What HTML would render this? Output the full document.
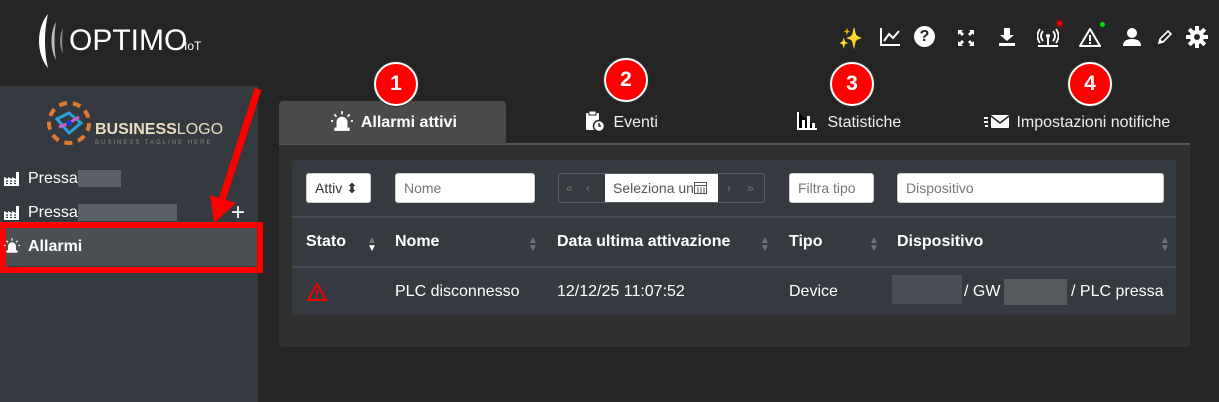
<!DOCTYPE html>
<html><head><meta charset="utf-8"><style>
*{box-sizing:border-box;margin:0;padding:0}
body{width:1219px;height:402px;background:#252525;font-family:"Liberation Sans",sans-serif;color:#fff;position:relative;overflow:hidden}
.abs{position:absolute}
.side{left:0;top:86px;width:258px;height:316px;background:#353a40}
.nav{font-size:16px;color:#fff}
.blur{display:inline-block;background:#5b5f66;height:17px;vertical-align:middle}
.circ{width:44px;height:44px;border-radius:50%;background:#f00;border:2px solid #fff;box-shadow:0 0 0 1px #333;font-weight:bold;font-size:21px;text-align:center;line-height:40px}
.tab{top:101px;height:43px;font-size:16px;line-height:43px;color:#eee}
.inp{background:#fff;border-radius:3px;border:1px solid #ccc;height:30px;top:173px;color:#777;font-size:14px;line-height:28px;padding-left:8px}
.th{top:233px;font-weight:bold;font-size:16px}
.td{top:283px;font-size:16px}
.sort{color:#6c737a;font-size:10px;line-height:8px}
svg.i{vertical-align:middle}
</style></head><body>
<svg width="0" height="0" style="position:absolute"><defs>
<symbol id="siren" viewBox="0 0 20 18"><path d="M5 16V10A5 5 0 0 1 15 10V16Z" fill="#fff"/><rect x="3" y="15" width="14" height="3" fill="#fff"/><path d="M10 0V3M3 3L5 5M17 3L15 5M0 9H2M18 9H20" stroke="#fff" stroke-width="1.6"/></symbol>
<symbol id="fact" viewBox="0 0 16 14"><path d="M0 14V5L4 7V5L8 7V5L12 7V0H15V14Z" fill="#fff"/><path d="M2 9H4M6 9H8M10 9H12M2 11.5H4M6 11.5H8M10 11.5H12" stroke="#353a40" stroke-width="1.3"/></symbol>
</defs></svg>
<!-- logo -->
<svg class="abs" style="left:38px;top:12px" width="30" height="58" viewBox="0 0 30 58"><path d="M10 2 C-2 16 -2 42 10 56 C6 40 6 18 10 2Z" fill="#fff"/><path d="M18 10 C12 20 12 38 18 48 C16 36 16 22 18 10Z" fill="#bbb"/><path d="M25 16 C21 24 21 34 25 42 C24 34 24 24 25 16Z" fill="#888"/></svg>
<div class="abs" style="left:69px;top:24px;font-size:30px;letter-spacing:0px">OPTIMO</div>
<div class="abs" style="left:184px;top:39px;font-size:12px">IoT</div>
<!-- top icons -->
<div class="abs" style="left:838px;top:26px;font-size:20px;color:#f5c542">✨</div>
<svg class="abs" style="left:880px;top:28px" width="20" height="18"><path d="M1 0V17H20" stroke="#fff" stroke-width="2" fill="none"/><path d="M4 13L9 6L13 10L19 3" stroke="#fff" stroke-width="2" fill="none"/></svg>
<div class="abs" style="left:914px;top:26px;width:21px;height:21px;border-radius:50%;background:#fff;color:#252525;font-weight:bold;font-size:16px;text-align:center;line-height:21px">?</div>
<svg class="abs" style="left:957px;top:29px" width="18" height="18" viewBox="0 0 18 18"><path d="M1 1H6L4.5 2.5L7 5L5 7L2.5 4.5L1 6ZM17 1V6L15.5 4.5L13 7L11 5L13.5 2.5L12 1ZM1 17V12L2.5 13.5L5 11L7 13L4.5 15.5L6 17ZM17 17H12L13.5 15.5L11 13L13 11L15.5 13.5L17 12Z" fill="#fff"/></svg>
<svg class="abs" style="left:998px;top:28px" width="18" height="18"><path d="M6 0H12V7H16L9 13L2 7H6Z" fill="#fff"/><rect x="1" y="15" width="16" height="3" fill="#fff"/></svg>
<svg class="abs" style="left:1037px;top:28px" width="22" height="20"><circle cx="11" cy="8" r="2" fill="#fff"/><path d="M6 3Q2 8 6 13M16 3Q20 8 16 13M3 1Q-2 8 3 15M19 1Q24 8 19 15" stroke="#fff" stroke-width="1.8" fill="none"/><path d="M11 10V18M1 18H21" stroke="#fff" stroke-width="2"/></svg>
<div class="abs" style="left:1057px;top:21px;width:5px;height:5px;border-radius:50%;background:#f00;box-shadow:0 0 5px #f00"></div>
<svg class="abs" style="left:1079px;top:28px" width="22" height="19"><path d="M11 1L21 18H1Z" stroke="#fff" stroke-width="2" fill="none" stroke-linejoin="round"/><rect x="10" y="7" width="2" height="6" fill="#fff"/><rect x="10" y="14" width="2" height="2" fill="#fff"/></svg>
<div class="abs" style="left:1100px;top:22px;width:5px;height:5px;border-radius:50%;background:#0d0"></div>
<svg class="abs" style="left:1123px;top:28px" width="18" height="18"><circle cx="9" cy="5" r="5" fill="#fff"/><path d="M0 18Q0 11 9 11Q18 11 18 18Z" fill="#fff"/></svg>
<svg class="abs" style="left:1157px;top:29px" width="16" height="16"><path d="M2 14L3 10L11 2L14 5L6 13Z" stroke="#fff" stroke-width="1.6" fill="none"/><path d="M1 15L3 10L6 13Z" fill="#fff"/></svg>
<svg class="abs" style="left:1186px;top:26px" width="22" height="22" viewBox="0 0 22 22"><g fill="#fff"><circle cx="11" cy="11" r="7"/><rect x="9" y="0" width="4" height="22"/><rect x="0" y="9" width="22" height="4"/><rect x="9" y="0" width="4" height="22" transform="rotate(45 11 11)"/><rect x="9" y="0" width="4" height="22" transform="rotate(-45 11 11)"/></g><circle cx="11" cy="11" r="3" fill="#252525"/></svg>
<!-- sidebar -->
<div class="abs side"></div>
<svg class="abs" style="left:45px;top:99px" width="48" height="48"><circle cx="24" cy="24" r="20" fill="none" stroke="#e07a30" stroke-width="4" stroke-dasharray="8 6"/><path d="M12 20L24 14L36 24L24 34Z" stroke="#2a9fd8" stroke-width="3" fill="none"/><path d="M14 28L24 24L34 18" stroke="#d65ac8" stroke-width="3" fill="none"/><circle cx="24" cy="24" r="3" fill="#1740c0"/></svg>
<div class="abs" style="left:95px;top:121px;font-size:16px;font-weight:bold;color:#e8dcc0">BUSINESS<span style="font-weight:normal">LOGO</span></div>
<div class="abs" style="left:95px;top:140px;font-size:6px;letter-spacing:2px;color:#888">BUSINESS TAGLINE HERE</div>
<svg class="abs" style="left:4px;top:172px" width="16" height="14"><use href="#fact"/></svg>
<div class="abs nav" style="top:170px;left:28px">Pressa<span class="blur" style="width:43px"></span></div>
<svg class="abs" style="left:4px;top:206px" width="16" height="14"><use href="#fact"/></svg>
<div class="abs nav" style="top:204px;left:28px">Pressa<span class="blur" style="width:99px"></span></div>
<div class="abs" style="left:231px;top:199px;font-size:24px">+</div>
<div class="abs" style="left:0;top:228px;width:258px;height:38px;background:#4a4f53"></div>
<div class="abs" style="left:0;top:222px;width:263px;height:51px;border:6px solid #f00"></div>
<svg class="abs" style="left:4px;top:238px" width="16" height="15"><use href="#siren"/></svg>
<div class="abs nav" style="top:238px;left:28px;font-weight:bold">Allarmi</div>
<svg class="abs" style="left:200px;top:85px" width="70" height="140"><path d="M58 4L22 115" stroke="#f00" stroke-width="7"/><path d="M10 110L36 118L14 138Z" fill="#f00"/></svg>
<!-- tabs -->
<div class="abs" style="left:279px;top:143px;width:911px;height:2px;background:#555"></div>
<div class="abs tab" style="left:279px;width:227px;background:#4a4a4a;border-radius:4px 4px 0 0;font-weight:bold;color:#fff;padding-left:52px"><svg class="i" width="22" height="20" style="margin-top:-3px;margin-right:4px"><use href="#siren"/></svg> Allarmi attivi</div>
<div class="abs tab" style="left:585px"><svg class="i" width="20" height="22" viewBox="0 0 20 22" style="margin-top:-3px;margin-right:4px"><rect x="1" y="3" width="13" height="17" rx="1" fill="#fff"/><rect x="4" y="1" width="7" height="4" fill="#fff" stroke="#252525"/><circle cx="14" cy="16" r="5.5" fill="#fff" stroke="#252525" stroke-width="1.5"/><path d="M14 13V16H16" stroke="#252525" stroke-width="1.4" fill="none"/></svg> Eventi</div>
<div class="abs tab" style="left:797px"><svg class="i" width="20" height="18" style="margin-top:-3px;margin-right:6px"><path d="M1 0V17H20" stroke="#fff" stroke-width="2"/><rect x="5" y="8" width="3" height="8" fill="#fff"/><rect x="10" y="4" width="3" height="12" fill="#fff"/><rect x="15" y="11" width="3" height="5" fill="#fff"/></svg> Statistiche</div>
<div class="abs tab" style="left:984px"><svg class="i" width="26" height="16" style="margin-top:-3px;margin-right:2px"><path d="M0 5H4M0 9H4M1 13H4" stroke="#fff" stroke-width="2"/><rect x="7" y="2" width="18" height="13" rx="1" fill="#fff"/><path d="M7 3L16 10L25 3" stroke="#252525" stroke-width="1.6" fill="none"/></svg> Impostazioni notifiche</div>
<div class="abs circ" style="left:374px;top:62px">1</div>
<div class="abs circ" style="left:604px;top:58px">2</div>
<div class="abs circ" style="left:830px;top:62px">3</div>
<div class="abs circ" style="left:1068px;top:62px">4</div>
<!-- panel -->
<div class="abs" style="left:279px;top:145px;width:911px;height:202px;background:#303030;border-radius:0 0 4px 4px"></div>
<div class="abs" style="left:292px;top:160px;width:884px;height:155px;background:#343a40;border-radius:3px"></div>
<div class="abs" style="left:292px;top:216px;width:884px;height:2px;background:#454c53"></div>
<div class="abs" style="left:292px;top:266px;width:884px;height:2px;background:#454c53"></div>
<div class="abs inp" style="left:306px;width:65px;color:#333">Attiv ⬍</div>
<div class="abs inp" style="left:395px;width:140px">Nome</div>
<div class="abs" style="left:558px;top:173px;width:207px;height:30px;border:1px solid #555d64;border-radius:3px;color:#777;font-size:12px;line-height:28px">
<span class="abs" style="left:7px">«</span><span class="abs" style="left:27px">‹</span><span class="abs" style="left:168px">›</span><span class="abs" style="left:188px">»</span>
<div class="abs" style="left:46px;top:0;width:113px;height:28px;background:#fff;color:#555;font-size:14px;padding-left:8px;overflow:hidden;white-space:nowrap">Seleziona un<svg class="i" width="13" height="13" style="margin-top:-3px"><rect x="0.5" y="1.5" width="12" height="11" fill="none" stroke="#555"/><path d="M0 4.5H13M4 6V12M7 6V12M10 6V12" stroke="#555"/></svg></div></div>
<div class="abs inp" style="left:789px;width:85px;overflow:hidden;white-space:nowrap">Filtra tipo</div>
<div class="abs inp" style="left:897px;width:267px">Dispositivo</div>
<div class="abs th" style="left:306px">Stato</div><div class="abs sort" style="left:367px;top:237px">▲<br><span style="color:#fff">▼</span></div>
<div class="abs th" style="left:395px">Nome</div><div class="abs sort" style="left:528px;top:237px">▲<br>▼</div>
<div class="abs th" style="left:557px">Data ultima attivazione</div><div class="abs sort" style="left:760px;top:237px">▲<br>▼</div>
<div class="abs th" style="left:789px">Tipo</div><div class="abs sort" style="left:869px;top:237px">▲<br>▼</div>
<div class="abs th" style="left:897px">Dispositivo</div><div class="abs sort" style="left:1160px;top:237px">▲<br>▼</div>
<svg class="abs" style="left:306px;top:282px" width="22" height="20"><path d="M11 2L20 18H2Z" stroke="#e00" stroke-width="2" fill="none"/><rect x="10" y="8" width="2" height="5" fill="#e00"/><rect x="10" y="14" width="2" height="2" fill="#e00"/></svg>
<div class="abs td" style="left:395px">PLC disconnesso</div>
<div class="abs td" style="left:557px">12/12/25 11:07:52</div>
<div class="abs td" style="left:789px">Device</div>
<div class="abs" style="left:892px;top:275px;width:70px;height:29px;background:#4a4f55"></div>
<div class="abs td" style="left:964px">/ GW</div>
<div class="abs" style="left:1004px;top:279px;width:63px;height:26px;background:#555a5f"></div>
<div class="abs td" style="left:1071px">/ PLC pressa</div>
</body></html>
